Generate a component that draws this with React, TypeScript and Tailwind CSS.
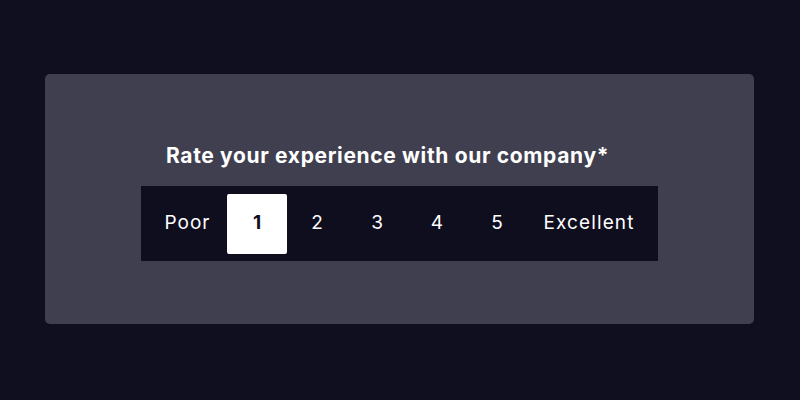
export default function App() {
  const nums = [1, 2, 3, 4, 5];
  return (
    <div
      className="w-[800px] h-[400px] bg-[#100f20] flex pt-[74px] pl-[45px]"
      style={{ fontFamily: "Inter, 'Noto Sans', sans-serif" }}
    >
      <div className="w-[709px] h-[250px] rounded-[5px] bg-[#403f4f] flex flex-col items-center">
        <div className="flex flex-col w-[517px] mt-[68px]">
          <div className="pl-[25px] text-white font-bold text-[21px] leading-[28px] tracking-[0.65px]">
            Rate your experience with our company*
          </div>
          <div className="mt-[16px] h-[75px] bg-[#0f0e1f] flex items-center px-[7px]">
            <div className="w-[79px] text-center text-white text-[19px] tracking-[1px]">Poor</div>
            {nums.map((n) => (
              <div
                key={n}
                className={
                  n === 1
                    ? "w-[60px] h-[60px] rounded-[2px] bg-white text-[#0f0e1f] font-bold text-[19px] flex items-center justify-center"
                    : "w-[60px] h-[60px] text-white text-[19px] flex items-center justify-center"
                }
              >
                {n}
              </div>
            ))}
            <div className="flex-1 text-center text-white text-[19px] tracking-[1.1px]">Excellent</div>
          </div>
        </div>
      </div>
    </div>
  );
}
